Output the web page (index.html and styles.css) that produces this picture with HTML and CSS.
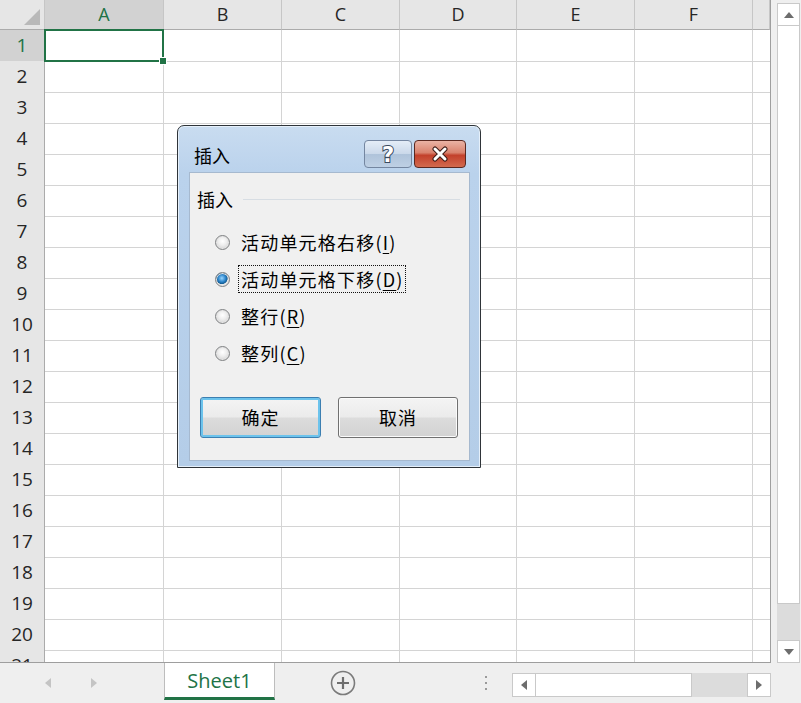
FILE: index.html
```html
<!DOCTYPE html>
<html lang="zh-CN">
<head>
    <meta charset="UTF-8">
    <title>插入</title>
    <link rel="stylesheet" href="styles.css">
</head>
<body>
<div class="app">
    <div class="main">
        <div class="sheet">
            <div class="row head">
                <div class="corner"><span class="tri"></span></div>
                <div class="colh sel">A</div>
                <div class="colh">B</div>
                <div class="colh">C</div>
                <div class="colh">D</div>
                <div class="colh">E</div>
                <div class="colh">F</div>
                <div class="colh"></div>
            </div>
            <div class="row"><div class="rowh sel">1</div><div class="cell active"><span class="handle"></span></div><div class="cell"></div><div class="cell"></div><div class="cell"></div><div class="cell"></div><div class="cell"></div><div class="cell"></div></div>
            <div class="row"><div class="rowh">2</div><div class="cell"></div><div class="cell"></div><div class="cell"></div><div class="cell"></div><div class="cell"></div><div class="cell"></div><div class="cell"></div></div>
            <div class="row"><div class="rowh">3</div><div class="cell"></div><div class="cell"></div><div class="cell"></div><div class="cell"></div><div class="cell"></div><div class="cell"></div><div class="cell"></div></div>
            <div class="row"><div class="rowh">4</div><div class="cell"></div><div class="cell"></div><div class="cell"></div><div class="cell"></div><div class="cell"></div><div class="cell"></div><div class="cell"></div></div>
            <div class="row"><div class="rowh">5</div><div class="cell"></div><div class="cell"></div><div class="cell"></div><div class="cell"></div><div class="cell"></div><div class="cell"></div><div class="cell"></div></div>
            <div class="row"><div class="rowh">6</div><div class="cell"></div><div class="cell"></div><div class="cell"></div><div class="cell"></div><div class="cell"></div><div class="cell"></div><div class="cell"></div></div>
            <div class="row"><div class="rowh">7</div><div class="cell"></div><div class="cell"></div><div class="cell"></div><div class="cell"></div><div class="cell"></div><div class="cell"></div><div class="cell"></div></div>
            <div class="row"><div class="rowh">8</div><div class="cell"></div><div class="cell"></div><div class="cell"></div><div class="cell"></div><div class="cell"></div><div class="cell"></div><div class="cell"></div></div>
            <div class="row"><div class="rowh">9</div><div class="cell"></div><div class="cell"></div><div class="cell"></div><div class="cell"></div><div class="cell"></div><div class="cell"></div><div class="cell"></div></div>
            <div class="row"><div class="rowh">10</div><div class="cell"></div><div class="cell"></div><div class="cell"></div><div class="cell"></div><div class="cell"></div><div class="cell"></div><div class="cell"></div></div>
            <div class="row"><div class="rowh">11</div><div class="cell"></div><div class="cell"></div><div class="cell"></div><div class="cell"></div><div class="cell"></div><div class="cell"></div><div class="cell"></div></div>
            <div class="row"><div class="rowh">12</div><div class="cell"></div><div class="cell"></div><div class="cell"></div><div class="cell"></div><div class="cell"></div><div class="cell"></div><div class="cell"></div></div>
            <div class="row"><div class="rowh">13</div><div class="cell"></div><div class="cell"></div><div class="cell"></div><div class="cell"></div><div class="cell"></div><div class="cell"></div><div class="cell"></div></div>
            <div class="row"><div class="rowh">14</div><div class="cell"></div><div class="cell"></div><div class="cell"></div><div class="cell"></div><div class="cell"></div><div class="cell"></div><div class="cell"></div></div>
            <div class="row"><div class="rowh">15</div><div class="cell"></div><div class="cell"></div><div class="cell"></div><div class="cell"></div><div class="cell"></div><div class="cell"></div><div class="cell"></div></div>
            <div class="row"><div class="rowh">16</div><div class="cell"></div><div class="cell"></div><div class="cell"></div><div class="cell"></div><div class="cell"></div><div class="cell"></div><div class="cell"></div></div>
            <div class="row"><div class="rowh">17</div><div class="cell"></div><div class="cell"></div><div class="cell"></div><div class="cell"></div><div class="cell"></div><div class="cell"></div><div class="cell"></div></div>
            <div class="row"><div class="rowh">18</div><div class="cell"></div><div class="cell"></div><div class="cell"></div><div class="cell"></div><div class="cell"></div><div class="cell"></div><div class="cell"></div></div>
            <div class="row"><div class="rowh">19</div><div class="cell"></div><div class="cell"></div><div class="cell"></div><div class="cell"></div><div class="cell"></div><div class="cell"></div><div class="cell"></div></div>
            <div class="row"><div class="rowh">20</div><div class="cell"></div><div class="cell"></div><div class="cell"></div><div class="cell"></div><div class="cell"></div><div class="cell"></div><div class="cell"></div></div>
            <div class="row"><div class="rowh">21</div><div class="cell"></div><div class="cell"></div><div class="cell"></div><div class="cell"></div><div class="cell"></div><div class="cell"></div><div class="cell"></div></div>
        </div>
        <div class="gutter"></div>
        <div class="vscroll">
            <div class="sbtn"><svg width="10" height="6" viewBox="0 0 10 6"><path d="M0 6 L5 0 L10 6 Z" fill="#6d6d6d"/></svg></div>
            <div class="vthumb"></div>
            <div class="vtrack"></div>
            <div class="sbtn"><svg width="10" height="6" viewBox="0 0 10 6"><path d="M0 0 L10 0 L5 6 Z" fill="#6d6d6d"/></svg></div>
        </div>
    </div>

    <div class="tabbar">
        <div class="navs">
            <svg width="6" height="10" viewBox="0 0 6 10"><path d="M6 0 L0 5 L6 10 Z" fill="#c4c4c4"/></svg>
            <svg width="6" height="10" viewBox="0 0 6 10"><path d="M0 0 L6 5 L0 10 Z" fill="#c4c4c4"/></svg>
        </div>
        <div class="tab">Sheet1</div>
        <div class="addsheet">
            <svg width="26" height="26" viewBox="0 0 26 26">
                <circle cx="13" cy="13" r="11.5" fill="none" stroke="#7b7b7b" stroke-width="1.6"/>
                <path d="M13 7 V19 M7 13 H19" stroke="#6e6e6e" stroke-width="2.2"/>
            </svg>
        </div>
        <div class="dots"><span></span><span></span><span></span></div>
        <div class="hscroll">
            <div class="hbtn"><svg width="6" height="10" viewBox="0 0 6 10"><path d="M6 0 L0 5 L6 10 Z" fill="#6d6d6d"/></svg></div>
            <div class="hthumb"></div>
            <div class="htrack"></div>
            <div class="hbtn"><svg width="6" height="10" viewBox="0 0 6 10"><path d="M0 0 L6 5 L0 10 Z" fill="#6d6d6d"/></svg></div>
        </div>
    </div>

    <div class="dialog">
        <div class="titlebar">
            <span class="title">插入</span>
            <div class="capbtns">
                <div class="capbtn help">
                    <svg width="20" height="24" viewBox="0 0 20 24"><text x="10" y="20" text-anchor="middle" class="qmark">?</text></svg>
                </div>
                <div class="capbtn close">
                    <svg width="20" height="16" viewBox="0 0 20 16">
                        <path d="M5 3 L15 13 M15 3 L5 13" stroke="#3d1b16" stroke-width="5" stroke-linecap="round"/>
                        <path d="M5 3 L15 13 M15 3 L5 13" stroke="#ffffff" stroke-width="3" stroke-linecap="round"/>
                    </svg>
                </div>
            </div>
        </div>
        <div class="client">
            <div class="group">
                <span>插入</span>
                <span class="line"></span>
            </div>
            <div class="options">
                <div class="opt"><span class="radio"></span><span class="lbl">活动单元格右移(<u>I</u>)</span></div>
                <div class="opt"><span class="radio on"></span><span class="lbl focus">活动单元格下移(<u>D</u>)</span></div>
                <div class="opt"><span class="radio"></span><span class="lbl">整行(<u>R</u>)</span></div>
                <div class="opt"><span class="radio"></span><span class="lbl">整列(<u>C</u>)</span></div>
            </div>
            <div class="buttons">
                <div class="btn default">确定</div>
                <div class="btn">取消</div>
            </div>
        </div>
    </div>
</div>
</body>
</html>
```

FILE: styles.css
```css
body {
    margin: 0;
    padding: 0;
    background: #f0f0f0;
    font-family: "Open Sans", "Noto Sans", sans-serif;
}
.app {
    position: relative;
    width: 801px;
    height: 703px;
    overflow: hidden;
    background: #efefef;
}
.main {
    display: flex;
    height: 663px;
}

/* grid */
.sheet {
    width: 771px;
    height: 663px;
    box-sizing: border-box;
    border-right: 1px solid #9e9e9e;
    border-bottom: 1px solid #9e9e9e;
    background: #ffffff;
    overflow: hidden;
}
.row {
    display: grid;
    grid-template-columns: 45px 119px 118px 118px 117px 118px 118px 17px;
    height: 31px;
}
.row.head {
    height: 30px;
}
.row > div {
    box-sizing: border-box;
    border-right: 1px solid #d4d4d4;
    border-bottom: 1px solid #d4d4d4;
}
.row > div:last-child {
    border-right: none;
}
.corner {
    position: relative;
    background: #e6e6e6;
    border-right: 1px solid #c6c6c6 !important;
    border-bottom: 1px solid #ababab !important;
}
.tri {
    position: absolute;
    right: 4px;
    bottom: 4px;
    width: 0;
    height: 0;
    border-left: 16px solid transparent;
    border-bottom: 16px solid #b9b9b9;
}
.colh {
    background: #e6e6e6;
    border-right: 1px solid #c6c6c6 !important;
    border-bottom: 1px solid #ababab !important;
    color: #262626;
    font-size: 18px;
    text-align: center;
    line-height: 29px;
}
.colh.sel {
    background: #d2d2d2;
    color: #217346;
}
.rowh {
    background: #e6e6e6;
    border-right: 1px solid #ababab !important;
    border-bottom: 1px solid #c6c6c6 !important;
    color: #262626;
    font-size: 19px;
    line-height: 31px;
    text-align: center;
}
.rowh.sel {
    background: #d2d2d2;
    color: #217346;
}
.cell.active {
    position: relative;
}
.cell.active::after {
    content: "";
    position: absolute;
    left: -1px;
    top: -1px;
    right: -1px;
    bottom: -1px;
    border: 2px solid #217346;
}
.handle {
    position: absolute;
    right: -4px;
    bottom: -4px;
    width: 6px;
    height: 6px;
    background: #217346;
    border: 1px solid #ffffff;
    z-index: 2;
}

/* vertical scrollbar */
.gutter {
    width: 6px;
}
.vscroll {
    width: 23px;
    padding-top: 3px;
    display: flex;
    flex-direction: column;
}
.sbtn {
    height: 23px;
    box-sizing: border-box;
    border: 1px solid #c9c9c9;
    background: #ffffff;
    display: flex;
    align-items: center;
    justify-content: center;
}
.vthumb {
    height: 578px;
    box-sizing: border-box;
    border: 1px solid #c9c9c9;
    border-top: none;
    background: #ffffff;
}
.vtrack {
    flex: 1;
    background: #dcdcdc;
}

/* sheet tabs */
.tabbar {
    height: 40px;
    display: flex;
    align-items: stretch;
    background: #efefef;
}
.navs {
    width: 164px;
    display: flex;
    align-items: center;
    gap: 40px;
    padding-left: 45px;
    box-sizing: border-box;
}
.tab {
    width: 111px;
    height: 37px;
    box-sizing: border-box;
    background: #ffffff;
    border-left: 1px solid #bdbdbd;
    border-right: 1px solid #bdbdbd;
    border-bottom: 3px solid #217346;
    color: #217346;
    font-size: 20px;
    text-align: center;
    line-height: 36px;
}
.addsheet {
    width: 201px;
    display: flex;
    align-items: center;
    padding-left: 55px;
    box-sizing: border-box;
}
.dots {
    width: 36px;
    display: flex;
    flex-direction: column;
    justify-content: center;
    gap: 4px;
    padding-left: 9px;
    box-sizing: border-box;
}
.dots span {
    width: 2px;
    height: 2px;
    background: #9a9a9a;
}
.hscroll {
    width: 259px;
    height: 24px;
    margin-top: 10px;
    display: flex;
}
.hbtn {
    width: 24px;
    box-sizing: border-box;
    border: 1px solid #c9c9c9;
    background: #ffffff;
    display: flex;
    align-items: center;
    justify-content: center;
}
.hthumb {
    width: 156px;
    box-sizing: border-box;
    border: 1px solid #c9c9c9;
    border-left: none;
    background: #ffffff;
}
.htrack {
    flex: 1;
    background: #dcdcdc;
}

/* dialog */
.dialog {
    position: absolute;
    left: 177px;
    top: 125px;
    width: 304px;
    height: 343px;
    box-sizing: border-box;
    border: 1px solid #2f3439;
    border-radius: 7px 7px 0 0;
    background: linear-gradient(180deg, #c9dcf0 0%, #bad2ec 14%, #b4cde8 100%);
    box-shadow: inset 0 0 0 1px #e6f0fa;
    display: flex;
    flex-direction: column;
    font-family: "Noto Sans CJK SC", "Noto Sans", sans-serif;
    color: #000000;
}
.titlebar {
    height: 46px;
    display: flex;
    justify-content: space-between;
    padding: 0 14px 0 16px;
}
.title {
    font-size: 18px;
    line-height: 58px;
}
.capbtns {
    display: flex;
    gap: 2px;
    padding-top: 14px;
}
.capbtn {
    height: 28px;
    box-sizing: border-box;
    border-radius: 4px;
    display: flex;
    align-items: center;
    justify-content: center;
}
.capbtn.help {
    width: 48px;
    border: 1px solid #7486a0;
    background: linear-gradient(180deg, #e4edf7 0%, #cbd9ea 48%, #afc3da 52%, #bed0e4 100%);
}
.capbtn.close {
    width: 52px;
    border: 1px solid #5a2820;
    background: linear-gradient(180deg, #eab3a5 0%, #d9826d 45%, #c3402b 55%, #d26a4e 100%);
}
.qmark {
    font-family: "DejaVu Sans", sans-serif;
    font-size: 21px;
    font-weight: bold;
    fill: #ffffff;
    stroke: #3a4a60;
    stroke-width: 2px;
    paint-order: stroke;
}
.client {
    flex: 1;
    margin: 0 10px 6px 11px;
    background: #f0f0f0;
    border: 1px solid #a6b9cf;
    display: flex;
    flex-direction: column;
}
.group {
    display: flex;
    align-items: center;
    gap: 10px;
    padding: 13px 9px 0 7px;
    font-size: 18px;
    height: 25px;
}
.group .line {
    flex: 1;
    border-top: 1px solid #d7dde3;
    margin-top: 2px;
}
.options {
    display: flex;
    flex-direction: column;
    gap: 9px;
    padding: 17px 0 0 25px;
}
.opt {
    display: flex;
    align-items: center;
    height: 28px;
    gap: 8px;
}
.radio {
    width: 15px;
    height: 15px;
    border-radius: 50%;
    box-sizing: border-box;
    border: 1px solid #7f8183;
    background: radial-gradient(circle at 50% 40%, #ffffff 0%, #eeeeee 40%, #c6c6c6 100%);
    box-shadow: inset 0 0 0 1px #e4e4e4;
}
.radio.on {
    background: radial-gradient(circle at 45% 40%, #9ad6ff 0%, #2c84c9 35%, #135d95 52%, #e8e8e8 58%, #d6d6d6 100%);
}
.lbl {
    font-size: 18px;
    letter-spacing: 1.2px;
    line-height: 26px;
    padding: 0 1px 0 2px;
    border: 1px dotted transparent;
}
.lbl.focus {
    border: 1px dotted #111111;
}
.lbl u {
    text-decoration-thickness: 1px;
    text-underline-offset: 3px;
}
.buttons {
    display: flex;
    gap: 17px;
    padding: 30px 0 0 10px;
}
.btn {
    width: 120px;
    height: 41px;
    box-sizing: border-box;
    border: 1px solid #707070;
    border-radius: 3px;
    background: linear-gradient(180deg, #f4f4f4 0%, #ebebeb 48%, #dcdcdc 52%, #d2d2d2 100%);
    box-shadow: inset 0 0 0 1px #fbfbfb;
    font-size: 18px;
    letter-spacing: 1px;
    text-align: center;
    line-height: 38px;
}
.btn.default {
    width: 121px;
    border: 1px solid #3c7fb1;
    box-shadow: inset 0 0 0 2px #6cc3ec;
}
```
